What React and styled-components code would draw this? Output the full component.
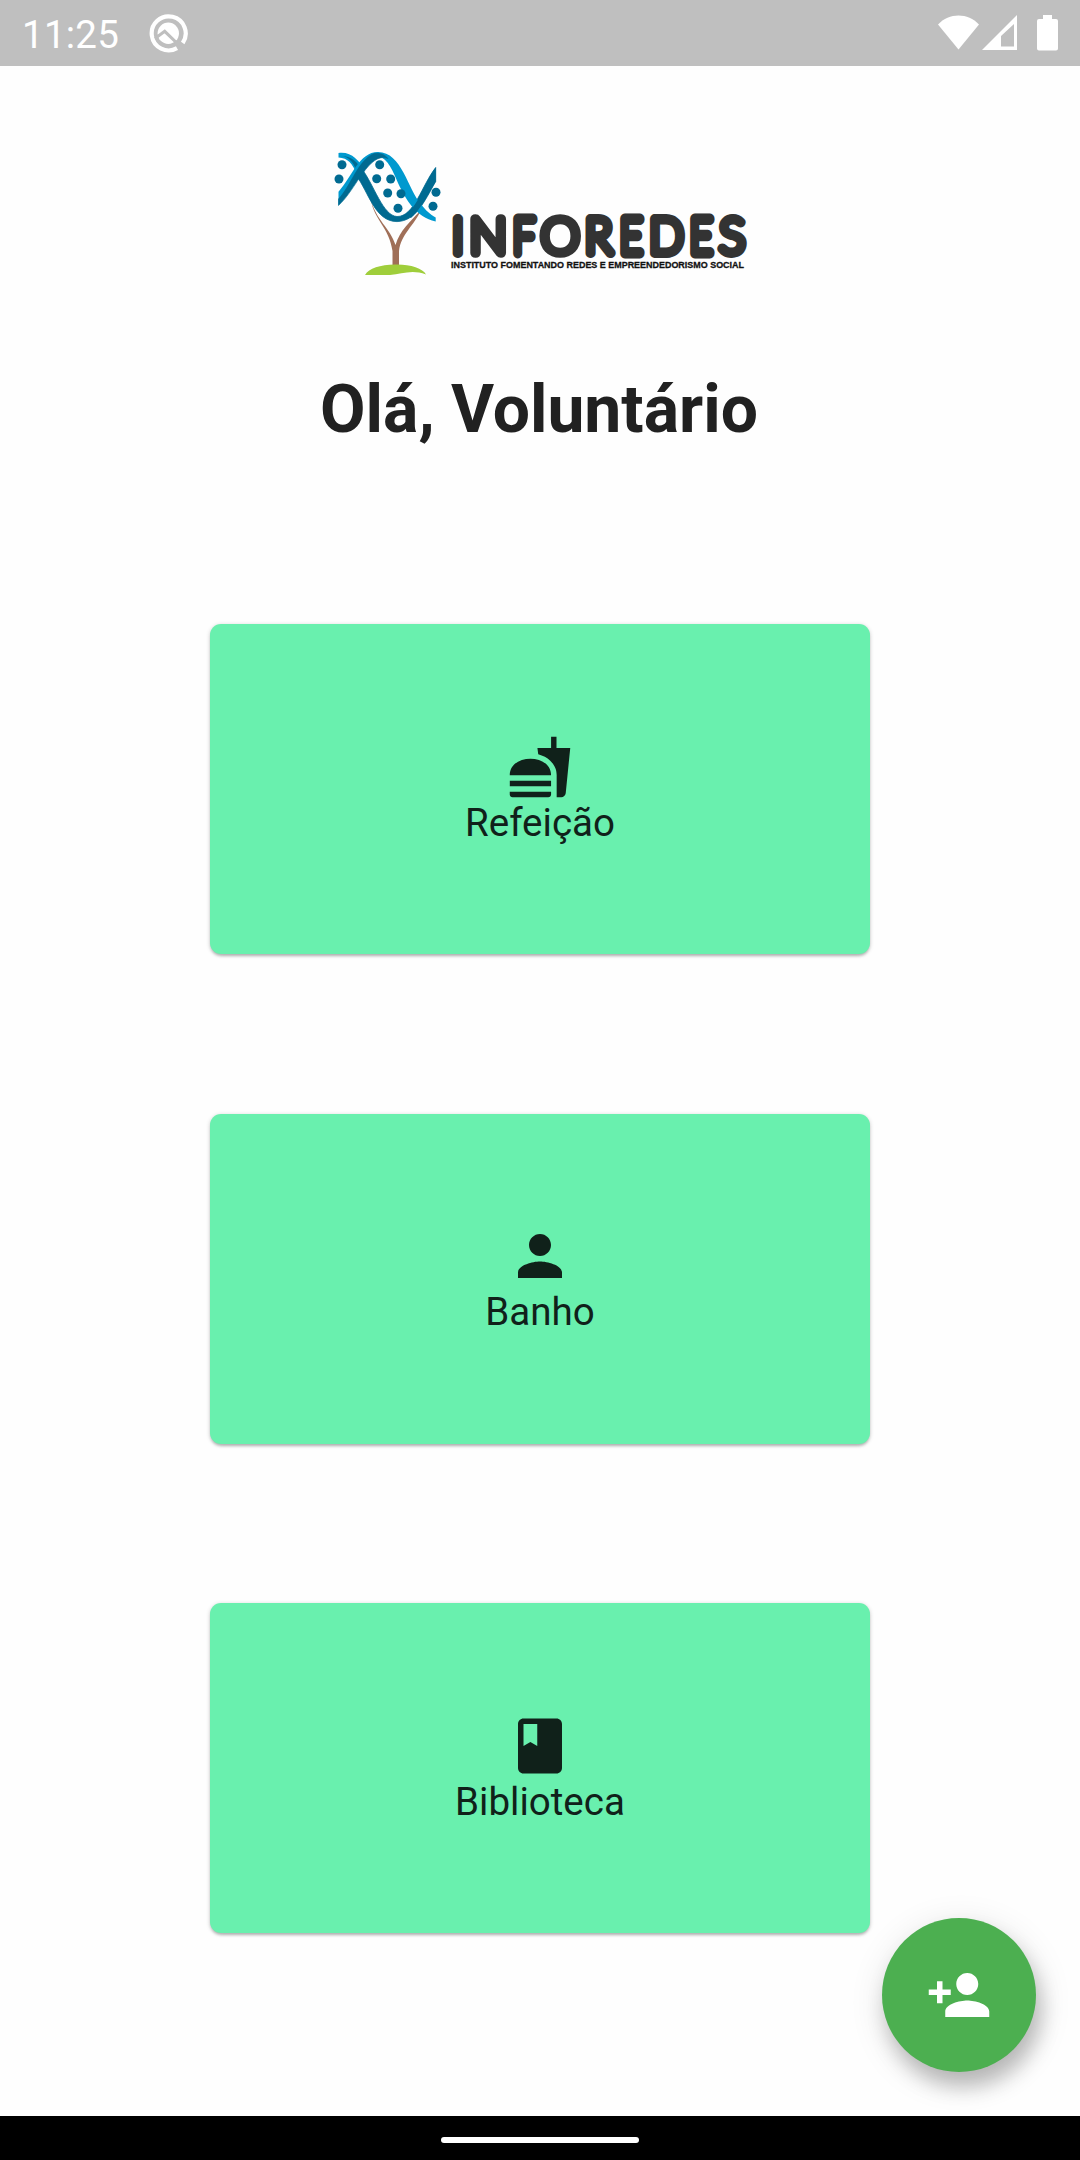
import React from "react";
import styled, { createGlobalStyle } from "styled-components";
import { MdFastfood, MdPerson, MdClass, MdPersonAdd } from "react-icons/md";

const GlobalStyle = createGlobalStyle`
  * { box-sizing: border-box; }
  html, body { margin: 0; padding: 0; background: #fefefe; }
`;

const Screen = styled.div`
  position: relative;
  display: flex;
  flex-direction: column;
  width: 1080px;
  height: 2160px;
  overflow: hidden;
  background: #fefefe;
  font-family: Roboto, "Noto Sans", sans-serif;
`;

const StatusBar = styled.header`
  display: flex;
  align-items: center;
  justify-content: space-between;
  flex: none;
  height: 66px;
  padding: 0 20px 0 22px;
  background: #bfbfbf;
  color: #fff;
`;

const StatusGroup = styled.div`
  display: flex;
  align-items: center;
`;

const Clock = styled.span`
  width: 126px;
  padding-top: 3px;
  font-size: 38.5px;
  line-height: 66px;
  letter-spacing: 0.25px;
`;

const Content = styled.main`
  display: flex;
  flex: 1;
  flex-direction: column;
  align-items: center;
`;

const Logo = styled.svg`
  display: block;
  flex: none;
  margin-top: 74px;
  overflow: visible;
`;

const Wordmark = styled.g`
  font-family: Lato, sans-serif;
  font-size: 48px;
  font-weight: 100;
  fill: #333;
  stroke: #333;
  stroke-width: 9.8px;
  stroke-linejoin: round;
`;

const Tagline = styled.text`
  font-family: "Liberation Sans", Arial, sans-serif;
  font-size: 9.8px;
  font-weight: 700;
  fill: #111;
  stroke: #111;
  stroke-width: 0.3px;
`;

const Greeting = styled.h1`
  margin: 92px 2px 0 0;
  height: 76px;
  line-height: 76px;
  font-size: 66px;
  font-weight: 700;
  color: #212121;
  white-space: nowrap;
`;

const CardList = styled.div`
  display: flex;
  flex-direction: column;
  gap: 159.6px;
  margin-top: 176px;
`;

const Card = styled.button`
  display: flex;
  flex-direction: column;
  align-items: center;
  justify-content: center;
  width: 660px;
  height: 330px;
  padding: 0;
  border: 0;
  border-radius: 11px;
  background: #69f0ae;
  color: #10211a;
  font-family: inherit;
  box-shadow: 0 3px 3px -1px rgba(0, 0, 0, 0.2), 0 1px 4px rgba(0, 0, 0, 0.2);
`;

const CardLabel = styled.span`
  font-size: 38.5px;
  line-height: 45px;
`;

const Fab = styled.button`
  position: absolute;
  right: 44px;
  bottom: 88px;
  display: flex;
  align-items: center;
  justify-content: center;
  width: 154px;
  height: 154px;
  padding: 0;
  border: 0;
  border-radius: 50%;
  background: #4caf50;
  color: #fff;
  box-shadow: 5px 15px 20px rgba(0, 0, 0, 0.22), 2px 8px 36px rgba(0, 0, 0, 0.12);
`;

const NavBar = styled.footer`
  display: flex;
  align-items: center;
  justify-content: center;
  flex: none;
  height: 44px;
  padding-top: 4px;
  background: #000;
`;

const HomePill = styled.div`
  width: 198px;
  height: 6px;
  border-radius: 3px;
  background: #fff;
`;

const letters = [
  { c: "I", x: 452, sx: 1 },
  { c: "N", x: 469.5, sx: 1.04 },
  { c: "F", x: 513, sx: 0.8 },
  { c: "O", x: 541, sx: 1.02 },
  { c: "R", x: 585, sx: 0.95 },
  { c: "E", x: 620, sx: 0.8 },
  { c: "D", x: 649.5, sx: 0.93 },
  { c: "E", x: 690, sx: 0.8 },
  { c: "S", x: 719.5, sx: 1 },
];

const dots = [
  [342, 164.7], [339, 179], [379.7, 164.7], [376.7, 178.7], [390.7, 179],
  [387.7, 193], [401, 193.7], [398, 208.3], [436, 192.3], [433, 206.3],
];

function BrandLogo() {
  return (
    <Logo width="420" height="140" viewBox="330 140 420 140">
      <path d="M371 200C374 220 389 227 392.500 251V265H399V251C401 234 414 226 421 210C410 222 400 230 395.500 245C390 228 376 220 371 200Z" fill="#a06f58" />
      <path d="M365 275C369 268 380 265 395 264.500C409 264 423 268 426 274.500C412 269 402 274 390 275Z" fill="#9fce3b" />
      <path d="M338.500 153C352 151.500 358 160 365 170L358 176C352 163 348 158 338.500 157.500Z" fill="#0099cf" />
      <path d="M338.500 156C348 155 355 162 358 176L363 172C357 160 350 155 338.500 156Z" fill="#006a91" />
      <path d="M362 169C374 185 383 216 397 216.500C414 217 422 185 435.700 167.500V181.500C424 202 416 221 397 221.600C375 221.500 369 193 356 175Z" fill="#006a91" stroke="#006a91" strokeWidth="0.800" />
      <path d="M338.500 191.700C352 177 359 152 378 152C402 152 408 190 421 204C426 211 430 214 435.700 217.500V221.500C416 217 406 200 398 183C393 171 388 159 379 156.500C363 162 354 190 338.500 205Z" fill="#0099cf" />
      <path d="M338.500 199C351 186 358 160 374 153.500C381 152.500 385 155 388 158.500C369 151 356 190 338.500 205.500Z" fill="#006a91" stroke="#006a91" strokeWidth="0.600" />
      <path d="M406 214C419 205 426 180 435.700 167.500V181.500C426 198 420 210 411 218Z" fill="#006a91" />
      {dots.map(([x, y]) => (
        <circle key={`${x}-${y}`} cx={x} cy={y} r="4.500" fill="#006a91" />
      ))}
      <Wordmark>
        {letters.map(({ c, x, sx }) => (
          <text key={x} transform={`translate(${x} 253) scale(${sx} 1)`} vectorEffect="non-scaling-stroke">
            {c}
          </text>
        ))}
      </Wordmark>
      <Tagline x="451" y="267.500" textLength="293" lengthAdjust="spacingAndGlyphs">
        INSTITUTO FOMENTANDO REDES E EMPREENDEDORISMO SOCIAL
      </Tagline>
    </Logo>
  );
}

function DebugIcon() {
  return (
    <svg width="40" height="40" viewBox="148 13 40 40">
      <path d="M182.700 43A17 17 0 1 0 177 48.200" fill="none" stroke="#fff" strokeWidth="4.200" />
      <circle cx="168.300" cy="33.300" r="10.700" fill="#fff" />
      <path d="M155 38.500L164.700 31.300L182 48" fill="none" stroke="#bfbfbf" strokeWidth="3" />
    </svg>
  );
}

function SystemIcons() {
  return (
    <svg width="124" height="40" viewBox="936 13 124 40">
      <path d="M938 24.500C949 12.500 968 12.500 979 24.500L958.500 49.500Z" fill="#fff" />
      <path d="M982 50L1017 15V50ZM1001 36V46.500H1014V24Z" fill="#fff" fillRule="evenodd" />
      <path d="M1043 15H1052V19H1056Q1058 19 1058 21V48.500Q1058 50.500 1056 50.500H1039Q1037 50.500 1037 48.500V21Q1037 19 1039 19H1043Z" fill="#fff" />
    </svg>
  );
}

const actions = [
  { label: "Refeição", Icon: MdFastfood },
  { label: "Banho", Icon: MdPerson },
  { label: "Biblioteca", Icon: MdClass },
];

export default function App() {
  return (
    <Screen>
      <GlobalStyle />
      <StatusBar>
        <StatusGroup>
          <Clock>11:25</Clock>
          <DebugIcon />
        </StatusGroup>
        <SystemIcons />
      </StatusBar>
      <Content>
        <BrandLogo />
        <Greeting>Olá, Voluntário</Greeting>
        <CardList>
          {actions.map(({ label, Icon }) => (
            <Card key={label}>
              <Icon size={66} />
              <CardLabel>{label}</CardLabel>
            </Card>
          ))}
        </CardList>
      </Content>
      <Fab aria-label="Adicionar pessoa">
        <MdPersonAdd size={66} />
      </Fab>
      <NavBar>
        <HomePill />
      </NavBar>
    </Screen>
  );
}
